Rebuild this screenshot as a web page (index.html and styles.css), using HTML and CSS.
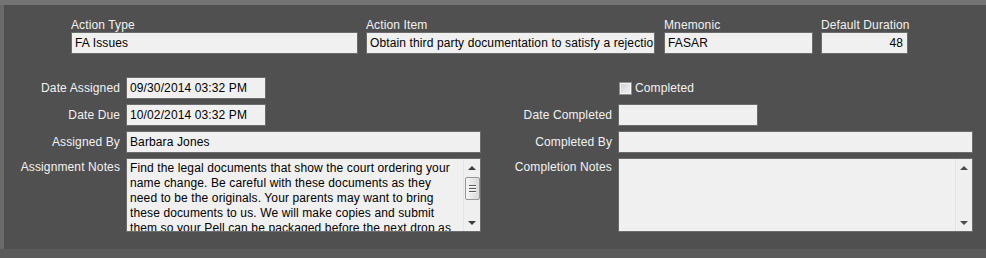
FILE: index.html
```html
<!DOCTYPE html>
<html>
<head>
<meta charset="utf-8">
<link rel="stylesheet" href="styles.css">
</head>
<body>
<div class="screen">
  <div class="panel">
    <div class="top-row">
      <div class="field w-type">
        <div class="cap">Action Type</div>
        <div class="box">FA Issues</div>
      </div>
      <div class="field w-item">
        <div class="cap">Action Item</div>
        <div class="box">Obtain third party documentation to satisfy a rejectio</div>
      </div>
      <div class="field w-mnem">
        <div class="cap">Mnemonic</div>
        <div class="box">FASAR</div>
      </div>
      <div class="field w-dur">
        <div class="cap">Default Duration</div>
        <div class="box num">48</div>
      </div>
    </div>

    <div class="grid">
      <div class="lbl">Date Assigned</div>
      <div class="box w-date">09/30/2014 03:32 PM</div>
      <div class="lbl"></div>
      <div class="check-row"><span class="checkbox"></span><span class="check-text">Completed</span></div>

      <div class="lbl">Date Due</div>
      <div class="box w-date">10/02/2014 03:32 PM</div>
      <div class="lbl">Date Completed</div>
      <div class="box w-date"></div>

      <div class="lbl">Assigned By</div>
      <div class="box">Barbara Jones</div>
      <div class="lbl">Completed By</div>
      <div class="box"></div>

      <div class="lbl top">Assignment Notes</div>
      <div class="memo">
        <div class="memo-text">Find the legal documents that show the court ordering your<br>name change. Be careful with these documents as they<br>need to be the originals. Your parents may want to bring<br>these documents to us. We will make copies and submit<br>them so your Pell can be packaged before the next drop as</div>
        <div class="sbar">
          <span class="arrow up"></span>
          <div class="track"><span class="thumb"><i></i><i></i><i></i></span></div>
          <span class="arrow down"></span>
        </div>
      </div>
      <div class="lbl top">Completion Notes</div>
      <div class="memo">
        <div class="memo-text"></div>
        <div class="sbar disabled">
          <span class="arrow up"></span>
          <div class="track"></div>
          <span class="arrow down"></span>
        </div>
      </div>
    </div>
  </div>
</div>
</body>
</html>
```

FILE: styles.css
```css
* { box-sizing: border-box; }

html, body {
  margin: 0;
  padding: 0;
}

body {
  background: #5b5b5b;
  font-family: "Liberation Sans", Arial, sans-serif;
  font-size: 12px;
  letter-spacing: 0.12px;
  width: 986px;
  height: 258px;
  overflow: hidden;
}

.screen {
  border-top: 5px solid #747474;
  padding-left: 4px;
  background: linear-gradient(to right, #6a6a6a 0, #6a6a6a 4px, transparent 4px);
}

.panel {
  background: #505050;
  height: 244px;
  padding-top: 13px;
}

.top-row {
  display: flex;
  margin-left: 67px;
}

.field {
  display: flex;
  flex-direction: column;
}

.w-type { width: 287px; margin-right: 8px; }
.w-item { width: 289px; margin-right: 9px; }
.w-mnem { width: 149px; margin-right: 8px; }
.w-dur  { width: 87px; }

.cap {
  color: #f2f2f2;
  line-height: 14px;
  height: 14px;
  white-space: nowrap;
}

.box {
  height: 22px;
  background: #f0f0f0;
  border: 1px solid #6c6c6c;
  color: #000;
  line-height: 20px;
  padding: 0 3px;
  white-space: nowrap;
  overflow: hidden;
}

.box.num {
  text-align: right;
  padding-right: 4px;
}

.grid {
  display: grid;
  grid-template-columns: 122px 355px 137px 355px;
  grid-template-rows: 22px 22px 22px 74px;
  row-gap: 5px;
  margin-top: 23px;
}

.lbl {
  color: #f2f2f2;
  text-align: right;
  padding-right: 6px;
  align-self: center;
  white-space: nowrap;
}

.lbl.top {
  align-self: start;
  padding-top: 2px;
}

.w-date { width: 140px; }

.check-row {
  display: flex;
  align-items: center;
  gap: 3px;
  padding-left: 1px;
}

.checkbox {
  width: 13px;
  height: 13px;
  border: 1px solid #8f8f8f;
  background: linear-gradient(135deg, #cfcfcf 0%, #e6e6e6 60%, #f3f3f3 100%);
  box-shadow: inset 0 0 0 1px #f4f4f4;
}

.check-text {
  color: #f2f2f2;
}

.memo {
  display: flex;
  height: 74px;
  background: #f0f0f0;
  border: 1px solid #6c6c6c;
}

.memo-text {
  flex: 1;
  color: #000;
  line-height: 15px;
  padding: 2px 0 0 3px;
  overflow: hidden;
  white-space: nowrap;
}

.sbar {
  width: 17px;
  display: flex;
  flex-direction: column;
  align-items: center;
  background: #efefef;
  border-left: 1px solid #e4e4e4;
}

.arrow {
  width: 0;
  height: 0;
  border-left: 4px solid transparent;
  border-right: 4px solid transparent;
  flex: none;
}

.arrow.up {
  margin-top: 7px;
  border-bottom: 4px solid #3c3c3c;
}

.arrow.down {
  margin-bottom: 6px;
  border-top: 4px solid #3c3c3c;
}

.sbar.disabled .arrow.up { border-bottom-color: #4a4a4a; }
.sbar.disabled .arrow.down { border-top-color: #4a4a4a; }

.track {
  flex: 1;
  width: 100%;
  display: flex;
  justify-content: center;
  padding-top: 7px;
}

.thumb {
  width: 15px;
  height: 23px;
  border: 1px solid #979797;
  border-radius: 2px;
  background: linear-gradient(to right, #f6f6f6, #e4e4e4 55%, #d9d9d9);
  display: flex;
  flex-direction: column;
  align-items: center;
  justify-content: center;
  gap: 1px;
}

.thumb i {
  display: block;
  width: 7px;
  height: 1px;
  background: #5a5a5a;
  box-shadow: 0 1px 0 #fafafa;
  margin-bottom: 1px;
}
```
